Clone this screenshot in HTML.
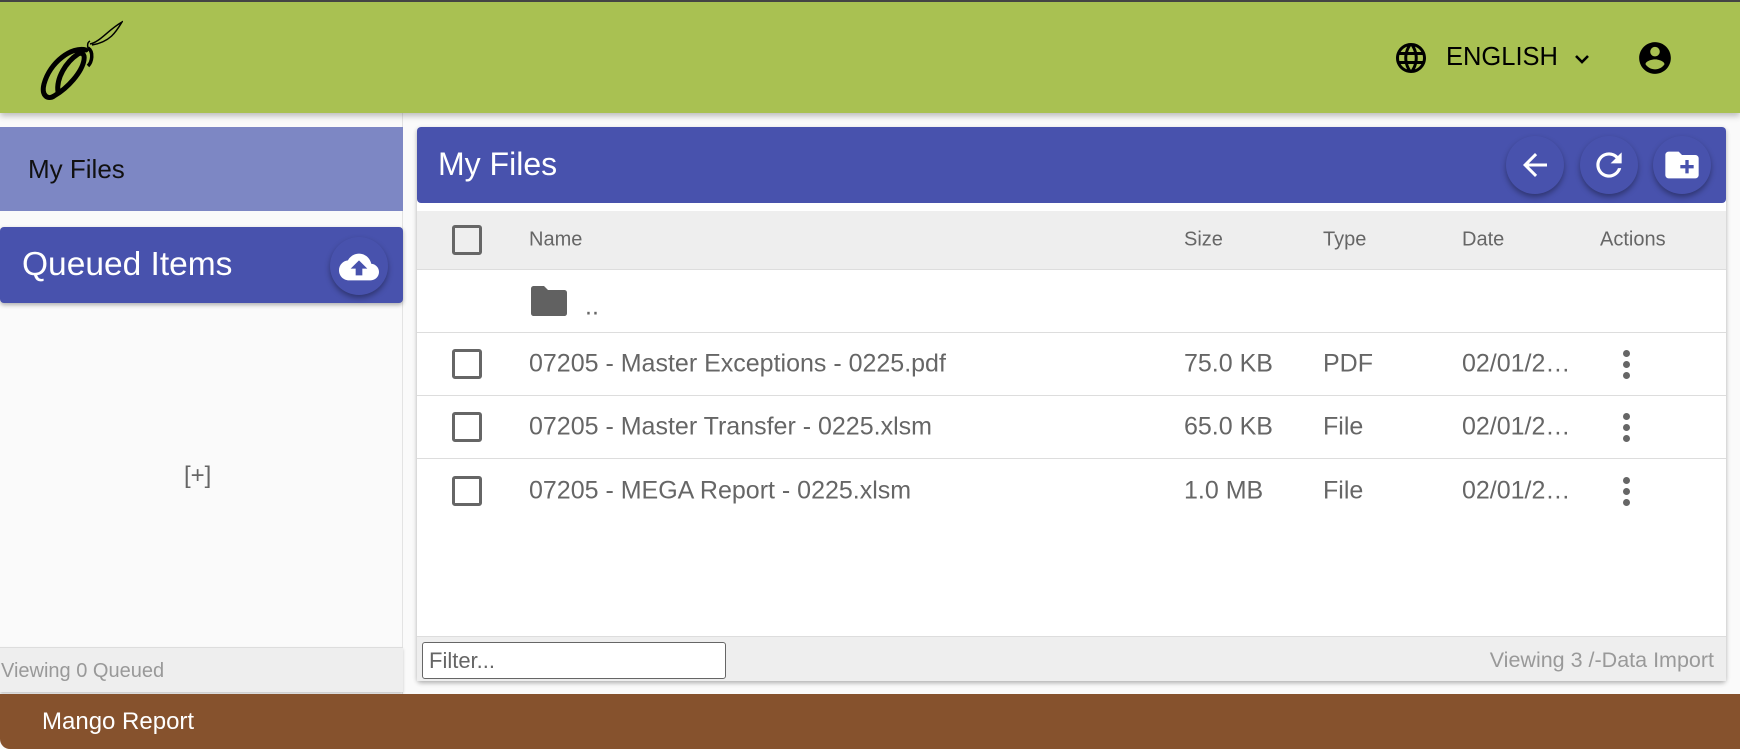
<!DOCTYPE html>
<html><head><meta charset="utf-8"><style>
*{box-sizing:border-box;margin:0;padding:0}
body{width:1740px;height:749px;overflow:hidden;background:#fafafa;font-family:"Liberation Sans",Arial,sans-serif;position:relative}
.hdr{position:absolute;left:0;top:0;width:1740px;height:113px;background:#a9c152;border-top:2px solid #444;box-shadow:0 3px 6px rgba(0,0,0,.25);z-index:3}
.abs{position:absolute}
.side{position:absolute;left:0;top:113px;width:403px;height:581px;background:#fafafa;border-right:1px solid #e3e3e3}
.myf{position:absolute;left:0;top:127px;width:403px;height:84px;background:#7d87c4;font-size:26px;color:#111;padding:27px 0 0 28px}
.qi{position:absolute;left:0;top:227px;width:403px;height:76px;background:#4852ad;border-radius:4px;box-shadow:0 2px 4px rgba(0,0,0,.3);color:#fff;font-size:33.5px;padding:19px 0 0 22px}
.fab{position:absolute;width:58px;height:58px;border-radius:50%;background:#4852ad;box-shadow:0 3px 6px rgba(0,0,0,.35)}
.card{position:absolute;left:417px;top:127px;width:1309px;height:554px;background:#fff;box-shadow:0 2px 5px rgba(0,0,0,.3);border-radius:4px}
.ch{position:absolute;left:0;top:0;width:1309px;height:76px;background:#4852ad;border-radius:4px;color:#fff;font-size:32px;padding:19px 0 0 21px}
.th{position:absolute;left:0;top:84px;width:1309px;height:59px;background:#eeeeee;border-bottom:1px solid #ddd;color:#666;font-size:20px}
.row{position:absolute;left:0;width:1309px;height:63px;border-bottom:1px solid #ddd;color:#666;font-size:25px}
.t{position:absolute;top:50%;transform:translateY(-50%);white-space:nowrap}
.cb{position:absolute;left:35px;top:50%;margin-top:-15px;width:30px;height:30px;border:3px solid #666;border-radius:3px}
.dots{position:absolute;left:1206px;top:50%;margin-top:-14px;width:7px}
.dots i{display:block;width:7px;height:7px;border-radius:50%;background:#666;margin-bottom:4px}
.cf{position:absolute;left:0;top:509px;width:1309px;height:45px;background:#eeeeee;border-top:1px solid #ddd}
</style></head><body>
<div class="hdr">
<svg class="abs" style="left:38px;top:16px" width="85" height="82" viewBox="0 0 85 82">
<path d="M48 32 C34 28 12 44 6 66 C3 78 10 82 16 78 C30 70 44 54 46 42 C47 36 44 34 40 36 C28 44 18 60 20 74" fill="none" stroke="#000" stroke-width="5" stroke-linecap="round"/>
<path d="M50 30 C56 34 54 44 50 48" fill="none" stroke="#000" stroke-width="3.5"/>
<path d="M50 30 C49 26 50 24 52 23 M52 26 C62 24 70 12 84 4 C78 14 72 24 54 27" fill="none" stroke="#000" stroke-width="1.5"/>
</svg>
<svg class="abs" style="left:1393px;top:38px" width="36" height="36" viewBox="0 0 24 24"><path fill="#000" d="M11.99 2C6.47 2 2 6.48 2 12s4.47 10 9.99 10C17.52 22 22 17.520 22 12S17.52 2 11.99 2zm6.93 6h-2.95c-.32-1.25-.78-2.45-1.38-3.56 1.84.63 3.37 1.91 4.33 3.56zM12 4.04c.83 1.2 1.480 2.53 1.91 3.96h-3.82c.43-1.430 1.08-2.76 1.91-3.96zM4.26 14C4.1 13.36 4 12.69 4 12s.1-1.36.26-2h3.38c-.08.66-.14 1.32-.14 2s.06 1.34.14 2H4.26zm.82 2h2.95c.32 1.25.78 2.45 1.38 3.56-1.84-.63-3.370-1.9-4.33-3.56zm2.95-8H5.08c.96-1.66 2.49-2.93 4.33-3.56C8.81 5.55 8.350 6.75 8.03 8zM12 19.96c-.83-1.2-1.48-2.53-1.91-3.96h3.82c-.43 1.43-1.08 2.76-1.91 3.96zM14.34 14H9.66c-.09-.66-.16-1.32-.16-2s.07-1.35.16-2h4.68c.09.65.16 1.32.16 2s-.07 1.34-.16 2zm.25 5.56c.6-1.11 1.06-2.31 1.38-3.56h2.950c-.96 1.65-2.49 2.93-4.33 3.56zM16.36 14c.08-.66.14-1.32.14-2s-.06-1.34-.14-2h3.38c.16.64.26 1.31.26 2s-.1 1.36-.26 2h-3.38z"/></svg>
<div class="abs" style="left:1446px;top:41px;font-size:25.5px;color:#000">ENGLISH</div>
<svg class="abs" style="left:1570px;top:45px" width="24" height="24" viewBox="0 0 24 24"><path d="M6 9l6 6 6-6" fill="none" stroke="#000" stroke-width="2.6"/></svg>
<svg class="abs" style="left:1636px;top:37px" width="38" height="38" viewBox="0 0 24 24"><path fill="#000" d="M12 2C6.48 2 2 6.48 2 12s4.48 10 10 10 10-4.48 10-10S17.52 2 12 2zm0 3c1.66 0 3 1.34 3 3s-1.34 3-3 3-3-1.34-3-3 1.34-3 3-3zm0 14.2c-2.5 0-4.71-1.28-6-3.22.03-1.99 4-3.08 6-3.08 1.99 0 5.97 1.09 6 3.08-1.29 1.94-3.5 3.22-6 3.22z"/></svg>
</div>

<div class="side"></div>
<div class="myf">My Files</div>
<div class="qi">Queued Items</div>
<div class="fab" style="left:330px;top:237px"><svg style="margin:10px 0 0 9px" width="40" height="40" viewBox="0 0 24 24"><path fill="#fff" d="M19.35 10.04C18.67 6.59 15.64 4 12 4 9.11 4 6.6 5.64 5.35 8.04 2.34 8.36 0 10.91 0 14c0 3.31 2.69 6 6 6h13c2.76 0 5-2.24 5-5 0-2.64-2.05-4.78-4.65-4.96zM14 13v4h-4v-4H7l5-5 5 5h-3z"/></svg></div>
<div class="abs" style="left:184px;top:462px;font-size:24px;color:#666">[+]</div>
<div class="abs" style="left:0;top:647px;width:403px;height:45px;background:#eeeeee;border-top:1px solid #ddd;box-shadow:0 2px 3px rgba(0,0,0,.2);color:#999;font-size:20px;padding:12px 0 0 1px">Viewing 0 Queued</div>

<div class="card">
<div class="ch">My Files</div>
<div class="fab" style="left:1089px;top:9px"><svg style="margin:11px 0 0 11px" width="36" height="36" viewBox="0 0 24 24"><path fill="#fff" d="M20 11H7.83l5.59-5.59L12 4l-8 8 8 8 1.41-1.41L7.83 13H20v-2z"/></svg></div>
<div class="fab" style="left:1163px;top:9px"><svg style="margin:10px 0 0 10px" width="38" height="38" viewBox="0 0 24 24"><path fill="#fff" d="M17.65 6.35C16.2 4.9 14.21 4 12 4c-4.42 0-7.99 3.58-7.99 8s3.57 8 7.99 8c3.73 0 6.84-2.55 7.730-6h-2.08c-.82 2.33-3.04 4-5.65 4-3.31 0-6-2.690-6-6s2.690-6 6-6c1.66 0 3.14.69 4.22 1.78L13 11h7V4l-2.35 2.35z"/></svg></div>
<div class="fab" style="left:1236px;top:9px"><svg style="margin:9px 0 0 9px" width="40" height="40" viewBox="0 0 24 24"><path fill="#fff" d="M20 6h-8l-2-2H4c-1.11 0-1.99.89-1.99 2L2 18c0 1.11.89 2 2 2h16c1.11 0 2-.89 2-2V8c0-1.11-.89-2-2-2zm-1 8h-3v3h-2v-3h-3v-2h3V9h2v3h3v2z"/></svg></div>

<div class="th">
<div class="cb"></div>
<div class="t" style="left:112px">Name</div>
<div class="t" style="left:767px">Size</div>
<div class="t" style="left:906px">Type</div>
<div class="t" style="left:1045px">Date</div>
<div class="t" style="left:1183px">Actions</div>
</div>
<div class="row" style="top:143px">
<svg class="abs" style="left:114px;top:16px" width="36" height="30" viewBox="0 0 36 30"><path fill="#616161" d="M3 0h10l4 4h16c2 0 3 1 3 3v20c0 2-1 3-3 3H3c-2 0-3-1-3-3V3c0-2 1-3 3-3z"/></svg>
<div class="t" style="left:168px;top:37px">..</div>
</div>
<div class="row" style="top:206px"><div class="cb"></div><div class="t" style="left:112px">07205 - Master Exceptions - 0225.pdf</div><div class="t" style="left:767px">75.0 KB</div><div class="t" style="left:906px">PDF</div><div class="t" style="left:1045px">02/01/2…</div><div class="dots"><i></i><i></i><i></i></div></div>
<div class="row" style="top:269px"><div class="cb"></div><div class="t" style="left:112px">07205 - Master Transfer - 0225.xlsm</div><div class="t" style="left:767px">65.0 KB</div><div class="t" style="left:906px">File</div><div class="t" style="left:1045px">02/01/2…</div><div class="dots"><i></i><i></i><i></i></div></div>
<div class="row" style="top:332px;border-bottom:none"><div class="cb"></div><div class="t" style="left:112px">07205 - MEGA Report - 0225.xlsm</div><div class="t" style="left:767px">1.0 MB</div><div class="t" style="left:906px">File</div><div class="t" style="left:1045px">02/01/2…</div><div class="dots"><i></i><i></i><i></i></div></div>

<div class="cf">
<div class="abs" style="left:5px;top:5px;width:304px;height:37px;background:#fff;border:1px solid #666;border-radius:3px;font-size:22px;color:#666;padding:5px 0 0 6px">Filter...</div>
<div class="abs" style="right:12px;top:11px;font-size:21.5px;color:#999">Viewing 3 /-Data Import</div>
</div>
</div>

<div class="abs" style="left:0;top:694px;width:1740px;height:55px;background:#86522d;border-radius:0 0 0 10px;color:#fff;font-size:24px;padding:14px 0 0 42px">Mango Report</div>
</body></html>
